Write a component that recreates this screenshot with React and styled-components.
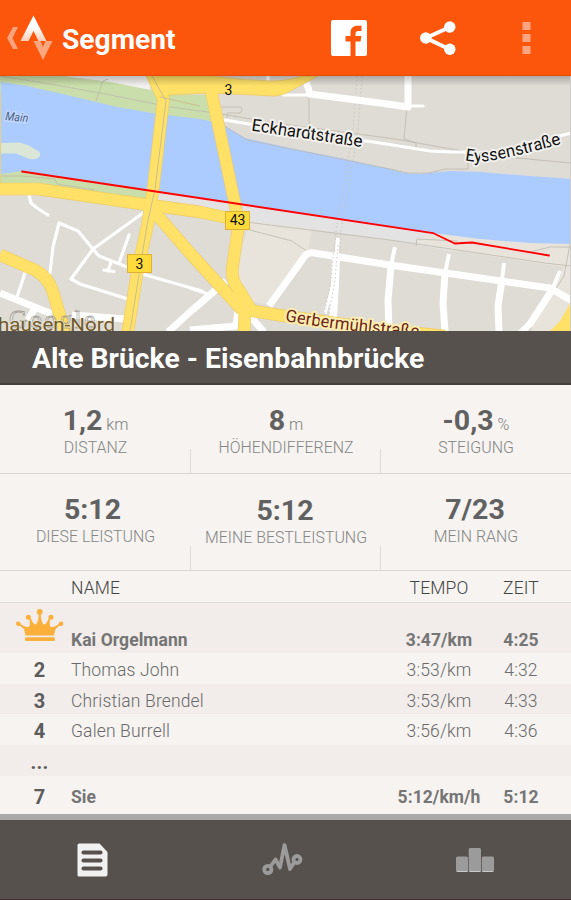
import React from 'react';
import styled, { createGlobalStyle } from 'styled-components';

const GlobalStyle = createGlobalStyle`
  * {
    box-sizing: border-box;
  }
  body {
    margin: 0;
    background: #f6f3f0;
    font-family: Roboto, "Liberation Sans", sans-serif;
  }
  svg {
    display: block;
    flex: none;
  }
`;

const ScreenStyles = styled.div`
  width: 571px;
  height: 900px;
  display: flex;
  flex-direction: column;
  overflow: hidden;
  background: #f6f3f0;
`;

const HeaderStyles = styled.header`
  height: 76px;
  flex: none;
  display: flex;
  align-items: center;
  padding-left: 6px;
  background: #fb560b;
  border-bottom: 1px solid #e84c05;
  color: #fff;
  h1 {
    width: 269px;
    margin: 0 0 0 9px;
    font-size: 28.2px;
    line-height: 34px;
    font-weight: 700;
    padding-top: 4px;
  }
`;

const ActionStyles = styled.div`
  display: flex;
  align-items: center;
  gap: 53px;
  .overflow {
    margin-left: 13px;
  }
`;

const MapStyles = styled.section`
  height: 255px;
  flex: none;
  svg {
    font-family: Roboto, sans-serif;
  }
`;

const TitleStyles = styled.h2`
  height: 54px;
  flex: none;
  margin: 0;
  padding-left: 32px;
  background: #57514e;
  border-bottom: 2px solid #45403d;
  color: #fff;
  font-size: 28.35px;
  font-weight: 700;
  line-height: 56px;
  white-space: nowrap;
`;

const StatRow = styled.section`
  height: ${(props) => props.$height}px;
  flex: none;
  display: grid;
  grid-template-columns: 191px 190px 1fr;
  border-bottom: 1px solid #d8d4d1;
`;

const StatStyles = styled.div`
  display: flex;
  flex-direction: column;
  align-items: center;
  padding-top: ${(props) => props.$top}px;
  background: linear-gradient(#dfdbd8, #dfdbd8) right bottom / 1px 24px
    no-repeat;
  &:last-child {
    background: none;
  }
  white-space: nowrap;
  .value {
    height: 30px;
    line-height: 30px;
    font-size: 28.5px;
    font-weight: 700;
    color: #616161;
    transform: translateX(${(props) => props.$shift || 0}px);
  }
  .unit {
    margin-left: 4px;
    font-size: 16px;
    font-weight: 350;
    color: #808080;
  }
  .label {
    line-height: 20px;
    margin-top: 2px;
    font-size: 15.9px;
    font-weight: 350;
    color: #858585;
  }
`;

const TableStyles = styled.section`
  flex: none;
  border-bottom: 6px solid #a9a9a9;
`;

const RowStyles = styled.div`
  display: grid;
  grid-template-columns: 71px 1fr 84px 80px 10px;
  height: ${(props) => props.$height}px;
  line-height: ${(props) => props.$line || props.$height}px;
  background: ${(props) => (props.$shaded ? '#f2edea' : '#f6f3f0')};
  font-size: 17.5px;
  letter-spacing: ${(props) => (props.$bold ? 0.05 : 0.15)}px;
  font-weight: ${(props) => (props.$bold ? 700 : 350)};
  color: ${(props) => (props.$bold ? '#757575' : '#6a6a6a')};
  white-space: nowrap;
  .rank {
    padding-left: 8px;
    text-align: center;
    font-size: 20px;
    font-weight: 700;
    color: #5c5c5c;
  }
  .center {
    text-align: center;
  }
`;

const TableHead = styled(RowStyles)`
  border-bottom: 1px solid #dedad8;
  color: #444;
`;

const CrownCell = styled.div`
  padding: 6px 0 0 16px;
`;

const TabBar = styled.nav`
  height: 80px;
  flex: none;
  display: grid;
  grid-template-columns: 185px 194px 191px;
  justify-items: center;
  align-items: center;
  background: #57514e;
  border-bottom: 1px solid #432f36;
`;

const StravaMark = () => (
  <svg width="47" height="48" viewBox="6 14 47 48">
    <defs>
      <linearGradient id="peak" x1="0" y1="0" x2="0" y2="1">
        <stop offset="0.45" stopColor="#fff" />
        <stop offset="1" stopColor="#fdcdb8" />
      </linearGradient>
    </defs>
    <path d="M13 27h5l-5.5 11 5.500 11h-5L7 38z" fill="#fda27b" />
    <path d="M33.500 15.500 46.500 41h-8l-5-10-5 10h-8z" fill="url(#peak)" />
    <path d="M33.500 41h7l2.500 6 2.500-6h7L43 60z" fill="#fda781" />
  </svg>
);

const FacebookIcon = () => (
  <svg width="36" height="36" viewBox="0 0 36 36">
    <rect width="36" height="36" rx="2" fill="#fff" />
    <path
      d="M19.500 36V21.500h-5V16h5v-3c0-5 3-7.300 7-7.300h4V11h-3c-2 0-3 .8-3 2.600V16h5.800l-.8 5.500h-5V36z"
      fill="#fb560b"
    />
  </svg>
);

const ShareIcon = () => (
  <svg width="36" height="36" viewBox="0 0 36 36">
    <path d="M30 7 6 18l24 11.500" fill="none" stroke="#fff" strokeWidth="4" />
    <g fill="#fff">
      <circle cx="5.800" cy="18" r="5.800" />
      <circle cx="29.800" cy="7" r="5.700" />
      <circle cx="29.800" cy="29.200" r="5.700" />
    </g>
  </svg>
);

const OverflowIcon = () => (
  <svg className="overflow" width="9" height="32" viewBox="0 0 9 32">
    <path d="M.5 0h8v8h-8zM.5 12h8v8h-8zM.5 24h8v8h-8z" fill="#fda580" />
  </svg>
);

const CrownIcon = () => (
  <svg width="48" height="33" viewBox="0 0 48 33">
    <g fill="#fbb03b">
      <path d="M9.500 26.500 8 20 2.500 15.500l1-1.500q5 4.500 9 4 2.500-2 .5-9l1.500-.5q2 6.500 5.500 7 2.500-3 3-11.500h1.500q.5 8.500 3 11.500 3.500-.5 5.500-7l1.500.5q-2 7 .5 9 4 .5 9-4l1 1.500L39.500 20 38 26.500z" />
      <circle cx="2.300" cy="14.800" r="2.300" />
      <circle cx="12.300" cy="8.200" r="2.500" />
      <circle cx="23.700" cy="2.900" r="2.900" />
      <circle cx="35" cy="8.200" r="2.500" />
      <circle cx="45" cy="14.800" r="2.300" />
      <rect x="9" y="28.300" width="30" height="3.700" rx="1.500" />
    </g>
  </svg>
);

const PageIcon = () => (
  <svg width="31" height="34" viewBox="0 0 31 34">
    <path
      d="M2 .5h20.500l8 8.500v22.500a2 2 0 0 1-2 2H2a1.500 1.500 0 0 1-1.500-1.500V2A1.500 1.500 0 0 1 2 .5z"
      fill="#f1f1f1"
    />
    <path
      d="M6.500 9.500h17M6.500 17.500h17M6.500 25.500h17"
      stroke="#57514e"
      strokeWidth="4.200"
      strokeLinecap="round"
    />
  </svg>
);

const ActivityIcon = () => (
  <svg width="41" height="34" viewBox="262 844 41 34">
    <g fill="none" stroke="#9b9b9b" strokeLinejoin="round">
      <path d="M270 868l5.500-7.500 4.500 8 4.500-22.500 5.500 24 4.500-7" strokeWidth="3.800" />
      <circle cx="267.800" cy="870.500" r="3.600" strokeWidth="3.800" />
      <circle cx="297" cy="860.500" r="3.500" strokeWidth="3.800" />
    </g>
  </svg>
);

const PodiumIcon = () => (
  <svg width="38" height="24" viewBox="0 0 38 24">
    <g fill="#9b9b9b">
      <rect x="0" y="8.500" width="12" height="15.500" rx="1.500" />
      <rect x="12.700" y="0" width="12.300" height="24" rx="1.500" />
      <rect x="25.800" y="8.500" width="12.200" height="15.500" rx="1.500" />
    </g>
    <path d="M1 23.500h10.500M13.500 23.500h11M26.500 23.500h10.500" stroke="#c9c9c9" />
  </svg>
);

const sideStreets = [
  'M29 195l2 8 6 5 11 7',
  'M50 273l3-26 6-24 19 8 15 18 6 7 28 11M142 274l60 17',
  'M143 213L93 249l-22 30 9 5 48 15',
  'M129 235l-10 28M111 262l-3 9M104 270l10 1.500M25 273l-8 24',
  'M190 288l15 5M225 120l30 5 125 18 50 8 20 1h20M555 137l16-4',
  'M283 95h27M268 76v6M409 106h14',
];

const mainStreets = [
  'M0 293l52 21M72 315l54 4M35 308l-7 12',
  'M226 281l-36 31-22 20M238 311l-2 15-46 4M250 316l14 16',
  'M269 306l36-50q3-4 9-3l76 12 160 23 24 14',
  'M305 78l5 16 70 9 28 4V76',
  'M391 266l-3 34 1 32M445 273l-2 30 2 29M502 280l-4 26 1 26M552 290l-22 34-12 12',
];

const mainRoads = [
  'M0 189h38l90 13 72 10 38 8',
  'M150 70l13.500 29L153 190l-5.500 35-10 45-10 64',
  'M211 90l26 124 2 8-6 42q-3 15 6 26l12 20',
  'M150 207l40 46 52 57M245 308l-1 26',
  'M0 255l35 15q14 8 18 22l7 24 6 18',
  'M240 309l45 7 100 14 60 6',
];

const SegmentMap = () => (
  <MapStyles>
    <svg width="571" height="255" viewBox="0 76 571 255">
      <defs>
        <linearGradient id="headerShadow" x1="0" y1="0" x2="0" y2="1">
          <stop offset="0" stopOpacity="0.22" />
          <stop offset="1" stopOpacity="0" />
        </linearGradient>
        <path id="eckhardt" d="M251 130.500L365 147.500" />
        <path id="eyssen" d="M465 160q8 2 18 1.500 28-3 86-20" />
        <path id="gerber" d="M285 321q55 10 145 17" />
      </defs>
      <rect y="76" width="571" height="255" fill="#dfdbd5" />

      {/* banks and parks */}
      <path d="M50 76h100v16l-40-10-50-6z" fill="#f3f1ef" />
      <path
        d="M0 76h62l48 6 41 8 12 5h48l6 35-217-34zM0 166l150 22v17L40 190H0z"
        fill="#cadeab"
      />
      <path d="M155 186l278 46 22 20-65-12-140-19-98-21z" fill="#e3e3e3" />
      <path d="M250 221l62 8-4 24-38 52-25-5-10-30z" fill="#e8e4dc" />
      <path d="M433 231l138 10v90h-40l33-64-114-17-35-8z" fill="#e8e4dc" />

      {/* river */}
      <path
        d="M1 82l26 4 40 9 50 12 41 7 42 5 14 3 9 3 22 13 45 10 50 10 50 11 14 4 16 1 30-3 30 1 50 4 41 3v65l-41-1-50-4-47-6L22 171l-21 3z"
        fill="#accbff"
      />
      <path
        d="M0 143l20-.5 9 3 10 6q3 5-2 7-7 2-11-1l-10-4H0z"
        fill="#dce6d6"
      />
      <path d="M.5 95v88" stroke="#e5cf82" />

      {/* footpaths and railways */}
      <g fill="none" stroke="#bdb9ad" strokeWidth="0.800">
        <path d="M0 76l50 8 50 9 70 14 45 6 60 10 120 16 90 16 86 8" />
        <path d="M96 101l7-20 5-2M1 176h20l34 3 2 5 38 6M223 125l24 15 143 29 17 4h22l16-4h23v-10" />
        <path d="M309 98v26M407 107l-3 32 12 4v5M220 107h20q4 2 0 6h-13v5" />
        <path d="M250 230l42 11 7 5 8 5M238 221l152 19 155 23 26 3M416 246l1-7 40 2M530 252l20-5h21" />
        <path d="M571 239l-7 37-28 44-7 11M153 76l14 25-12 85-7 34-17 111" />
      </g>
      <g fill="none" stroke="#c9c6c4" strokeDasharray="1.500 2.500">
        <path d="M357 76l-4 54-8 50-9 50-2 38-11 60" />
        <path d="M362 76l-4 54-8 50-9 50-2 38-11 60" />
      </g>

      <g fill="none" stroke="#fff" strokeLinejoin="round">
        {sideStreets.map((d) => (
          <path key={d} d={d} strokeWidth="3.200" strokeLinecap="round" />
        ))}
        {mainStreets.map((d) => (
          <path key={d} d={d} strokeWidth="7" />
        ))}
        <path
          d="M395 247l-4 18M449 254l-4 19M504 263l-2 17M560 271l-8 19M338 238l-3 32"
          strokeWidth="4"
        />
        <path d="M336 258l-1 25-2 36" strokeWidth="8" />
        <path d="M334 280l-9 34" strokeWidth="3" />
      </g>
      <g fill="none" stroke="#cfccca" strokeDasharray="1.500 2.500">
        <path d="M334 245l-3 35-8 40M338 245l-3 35-7 40" />
      </g>

      <g fill="none" strokeLinejoin="round">
        {mainRoads.map((d) => (
          <path key={d} d={d} stroke="#efcb62" strokeWidth="12.500" />
        ))}
        <path
          d="M147 76l14 28 8-9 41-2 65 3q10-1 17-6l26-14h-16q-14 5-32 5-30-1-57-5z"
          fill="#ffe168"
          stroke="#efcb62"
          strokeWidth="0.800"
        />
        {mainRoads.map((d) => (
          <path key={d} d={d} stroke="#ffe168" strokeWidth="11.300" />
        ))}
      </g>
      <path d="M571 302l-11 19-10 10h21z" fill="#ffe168" />
      <path
        d="M152 76l14 25-11 88-8 36-17 106M160 97l40 9"
        fill="none"
        stroke="#c9bf91"
      />

      {/* segment track */}
      <path
        d="M22 171.500l411 61.500 22 10.500 17-1 77 13"
        fill="none"
        stroke="#f00"
        strokeWidth="1.800"
        strokeLinecap="round"
      />

      {/* road shields */}
      <g fill="#fedb3b" stroke="#dfb137">
        <rect x="127.500" y="254.500" width="24" height="18" />
        <rect x="225.500" y="211.500" width="24" height="18" />
      </g>
      <g fontSize="14" textAnchor="middle" fill="#111">
        <text x="139.500" y="268.500">3</text>
        <text x="237.500" y="225">43</text>
        <text x="228.500" y="94.500">3</text>
      </g>

      <text
        x="9"
        y="328"
        fontSize="25"
        fontFamily="Liberation Serif, serif"
        fill="#fff"
        fillOpacity="0.150"
        stroke="#8a8780"
        strokeOpacity="0.700"
        strokeWidth="0.800"
        textLength="86"
      >
        Google
      </text>

      {/* street labels */}
      <g
        fontSize="17"
        strokeWidth="4"
        strokeLinejoin="round"
        paintOrder="stroke"
      >
        <g fill="#111" stroke="#f2f0ed">
          <text textLength="112">
            <textPath href="#eckhardt">Eckhardtstraße</textPath>
          </text>
          <text textLength="99">
            <textPath href="#eyssen">Eyssenstraße</textPath>
          </text>
        </g>
        <text fill="#6e2418" stroke="#fbeeb0" textLength="135">
          <textPath href="#gerber">Gerbermühlstraße</textPath>
        </text>
        <text
          x="-2"
          y="330.500"
          fill="#725a2b"
          fontSize="19"
          stroke="#eee9dc"
          strokeOpacity="0.500"
          strokeWidth="2"
          textLength="117"
          lengthAdjust="spacingAndGlyphs"
        >
          hausen-Nord
        </text>
      </g>
      <text
        x="5"
        y="120"
        fontSize="12"
        fontStyle="italic"
        fill="#4c6285"
        stroke="#c3d9ff"
        strokeWidth="3"
        paintOrder="stroke"
        transform="rotate(6 5 120)"
        textLength="23"
        lengthAdjust="spacingAndGlyphs"
      >
        Main
      </text>
      <rect y="76" width="571" height="10" fill="url(#headerShadow)" />
      <path d="M570.500 76v255" stroke="#cfcbc8" />
    </svg>
  </MapStyles>
);

const Stat = ({ value, unit, label, top, shift }) => (
  <StatStyles $top={top} $shift={shift}>
    <div className="value">
      {value}
      {unit && <span className="unit">{unit}</span>}
    </div>
    <div className="label">{label}</div>
  </StatStyles>
);

const rows = [
  { rank: 2, name: 'Thomas John', pace: '3:53/km', time: '4:32', height: 31 },
  {
    rank: 3,
    name: 'Christian Brendel',
    pace: '3:53/km',
    time: '4:33',
    height: 30,
    shaded: true,
  },
  { rank: 4, name: 'Galen Burrell', pace: '3:56/km', time: '4:36', height: 31 },
  { rank: '...', height: 31, shaded: true },
];

const App = () => (
  <>
    <GlobalStyle />
    <ScreenStyles>
      <HeaderStyles>
        <StravaMark />
        <h1>Segment</h1>
        <ActionStyles>
          <FacebookIcon />
          <ShareIcon />
          <OverflowIcon />
        </ActionStyles>
      </HeaderStyles>
      <SegmentMap />
      <TitleStyles>Alte Brücke - Eisenbahnbrücke</TitleStyles>
      <StatRow $height={89}>
        <Stat top={21} value="1,2" unit="km" label="DISTANZ" />
        <Stat top={21} value="8" unit="m" label="HÖHENDIFFERENZ" />
        <Stat top={21} value="-0,3" unit="%" label="STEIGUNG" />
      </StatRow>
      <StatRow $height={97}>
        <Stat top={21} shift={-3} value="5:12" label="DIESE LEISTUNG" />
        <Stat top={22} shift={-1} value="5:12" label="MEINE BESTLEISTUNG" />
        <Stat top={21} shift={-1} value="7/23" label="MEIN RANG" />
      </StatRow>
      <TableStyles>
        <TableHead $height={32} $line={35}>
          <span />
          <span>NAME</span>
          <span className="center">TEMPO</span>
          <span className="center">ZEIT</span>
        </TableHead>
        <RowStyles $height={50} $line={74} $shaded $bold>
          <CrownCell>
            <CrownIcon />
          </CrownCell>
          <span>Kai Orgelmann</span>
          <span className="center">3:47/km</span>
          <span className="center">4:25</span>
        </RowStyles>
        {rows.map(({ rank, name, pace, time, height, shaded }) => (
          <RowStyles key={rank} $height={height} $line={35} $shaded={shaded}>
            <span className="rank">{rank}</span>
            <span>{name}</span>
            <span className="center">{pace}</span>
            <span className="center">{time}</span>
          </RowStyles>
        ))}
        <RowStyles $height={38} $line={42} $bold>
          <span className="rank">7</span>
          <span>Sie</span>
          <span className="center">5:12/km/h</span>
          <span className="center">5:12</span>
        </RowStyles>
      </TableStyles>
      <TabBar>
        <PageIcon />
        <ActivityIcon />
        <PodiumIcon />
      </TabBar>
    </ScreenStyles>
  </>
);

export default App;
